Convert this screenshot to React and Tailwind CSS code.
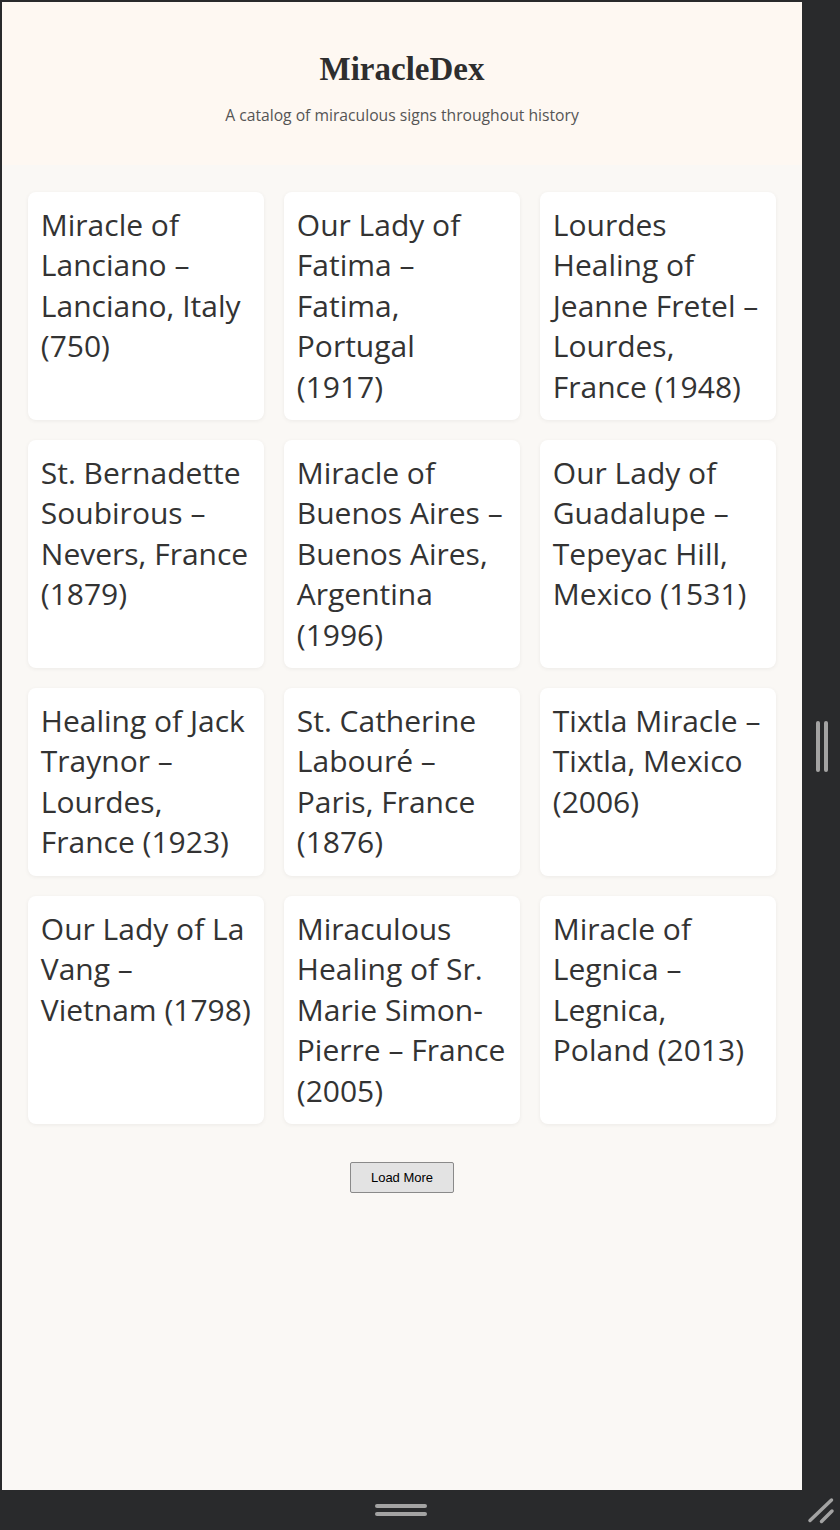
import React from 'react';

const miracles = [
    "Miracle of Lanciano – Lanciano, Italy (750)",
    "Our Lady of Fatima – Fatima, Portugal (1917)",
    "Lourdes Healing of Jeanne Fretel – Lourdes, France (1948)",
    "St. Bernadette Soubirous – Nevers, France (1879)",
    "Miracle of Buenos Aires – Buenos Aires, Argentina (1996)",
    "Our Lady of Guadalupe – Tepeyac Hill, Mexico (1531)",
    "Healing of Jack Traynor – Lourdes, France (1923)",
    "St. Catherine Labouré – Paris, France (1876)",
    "Tixtla Miracle – Tixtla, Mexico (2006)",
    "Our Lady of La Vang – Vietnam (1798)",
    "Miraculous Healing of Sr. Marie Simon-Pierre – France (2005)",
    "Miracle of Legnica – Legnica, Poland (2013)",
];

const MiracleCard = ({ title }) => (
    <div className="bg-white rounded-lg p-[0.8rem] shadow-[0_1px_4px_rgba(0,0,0,0.06)]">
        <p className="text-[30px] leading-[1.35] text-[#333]">{title}</p>
    </div>
);

const App = () => {
    return (
        <div className="w-[840px] h-[1530px] bg-[#292a2c] flex flex-col overflow-hidden">
            <div className="flex flex-1 pt-[2px] pl-[2px]">
                {/* page */}
                <div className="w-[800px] flex flex-col bg-[#faf8f5] font-['Open_Sans',sans-serif]">
                    <header className="bg-[#fef8f2] pt-[47px] pb-[40px] text-center">
                        <h1 className="font-['Liberation_Serif',serif] font-bold text-[33px] leading-[40px] text-[#2e2e2e]">
                            MiracleDex
                        </h1>
                        <p className="mt-[16px] text-[15.7px] leading-[20px] text-[#555]">
                            A catalog of miraculous signs throughout history
                        </p>
                    </header>

                    <main className="px-[26px] pt-[27px] flex flex-col items-center">
                        <div className="grid grid-cols-3 gap-5 w-full">
                            {miracles.map((m) => (
                                <MiracleCard key={m} title={m} />
                            ))}
                        </div>
                        <button className="mt-[38px] w-[104px] h-[31px] bg-[#e3e3e3] border border-[#8a8a8a] rounded-[2px] text-[13px] text-black font-['Liberation_Sans',sans-serif]">
                            Load More
                        </button>
                    </main>
                </div>

                {/* right resize handle */}
                <div className="flex-1 flex items-center justify-center gap-[4px] pl-[1px]">
                    <div className="w-[4px] h-[51px] rounded-full bg-[#a3a3a3]" />
                    <div className="w-[4px] h-[51px] rounded-full bg-[#a3a3a3]" />
                </div>
            </div>

            {/* bottom resize handle */}
            <div className="h-[40px] flex">
                <div className="w-[802px] flex flex-col items-center justify-center gap-[4px] pb-[1px]">
                    <div className="w-[52px] h-[4px] rounded-full bg-[#a3a3a3]" />
                    <div className="w-[52px] h-[4px] rounded-full bg-[#a3a3a3]" />
                </div>
                <div className="flex-1 relative">
                    <svg width="38" height="40" viewBox="0 0 38 40" className="absolute left-0 top-0">
                        <line x1="8" y1="30.5" x2="29.5" y2="10" stroke="#a3a3a3" strokeWidth="3.5" strokeLinecap="round" />
                        <line x1="19.5" y1="31.5" x2="30" y2="21" stroke="#a3a3a3" strokeWidth="3.5" strokeLinecap="round" />
                    </svg>
                </div>
            </div>
        </div>
    );
};

export default App;
